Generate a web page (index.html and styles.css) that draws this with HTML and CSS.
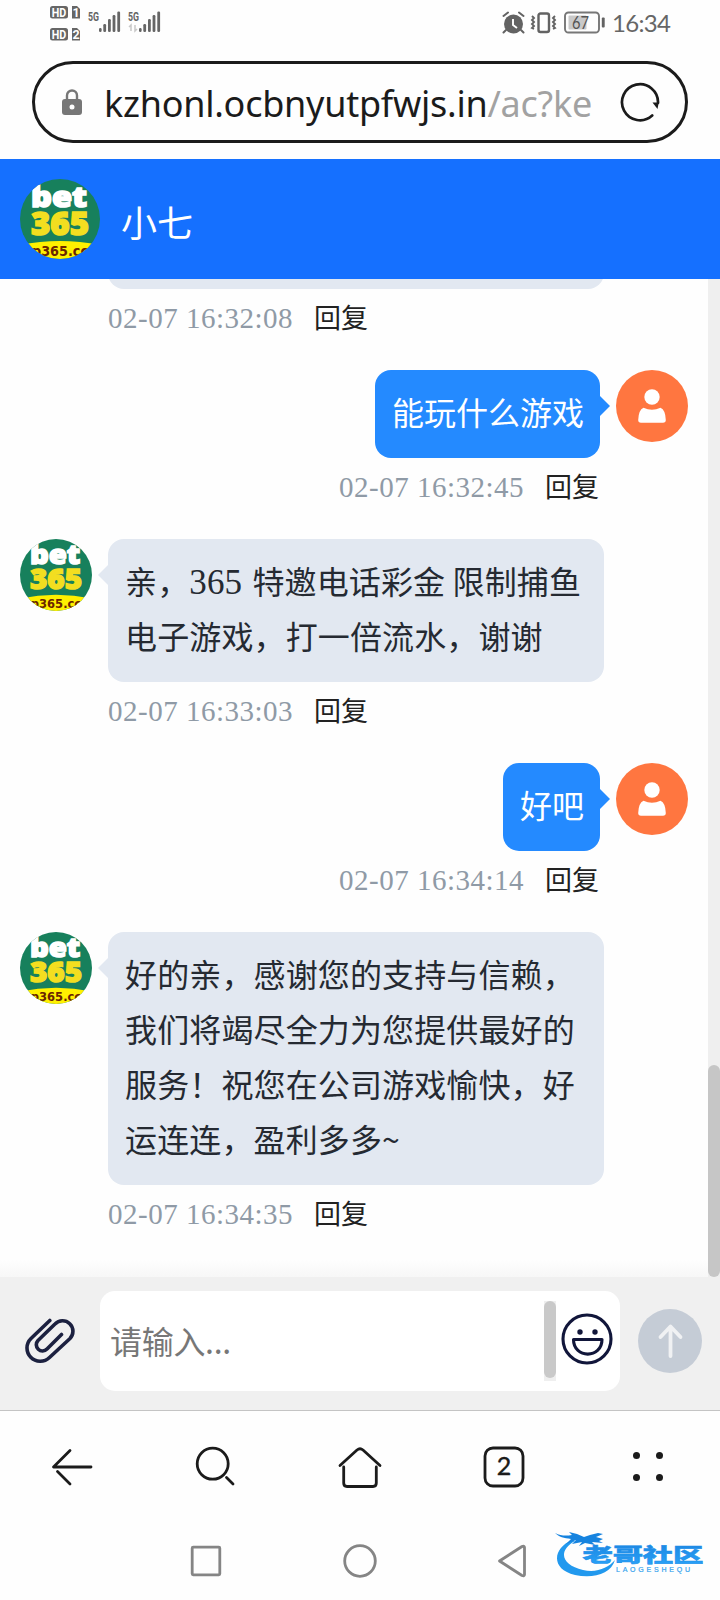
FILE: index.html
```html
<!DOCTYPE html>
<html lang="zh-CN">
<head>
<meta charset="utf-8">
<title>小七</title>
<link rel="stylesheet" href="styles.css">
</head>
<body>
<svg class="defs" aria-hidden="true">
  <defs>
    <clipPath id="disc"><circle cx="40" cy="40" r="40"/></clipPath>
    <linearGradient id="sky" x1="0" y1="0" x2="0" y2="1"><stop offset="0" stop-color="#1a80dc"/><stop offset="1" stop-color="#2aa5fb"/></linearGradient>
    <symbol id="brand" viewBox="0 0 80 80">
      <g clip-path="url(#disc)">
        <rect width="80" height="80" fill="#17805c"/>
        <path d="M0 66Q40 58 80 66V80H0z" fill="#fff000"/>
        <text class="logo-bold" x="11" y="28" font-size="29" textLength="56" lengthAdjust="spacingAndGlyphs" fill="#fff" stroke="#fff">bet</text>
        <text class="logo-bold" x="11" y="56" font-size="32" textLength="58" lengthAdjust="spacingAndGlyphs" fill="#f3de20" stroke="#f3de20">365</text>
        <text class="logo-url" x="12" y="77" font-size="13.500" textLength="56" lengthAdjust="spacingAndGlyphs" fill="#6b2500">p365.cc</text>
      </g>
    </symbol>
    <symbol id="person" viewBox="0 0 72 72">
      <circle cx="36" cy="36" r="36" fill="#ff7640"/>
      <circle cx="36" cy="27" r="7.700" fill="#fff"/>
      <path d="M27.500 37.800Q36 41.800 44.500 37.800Q49.500 40 49.800 50Q49.800 52.800 47 52.800H25Q22.200 52.800 22.200 50Q22.500 40 27.500 37.800z" fill="#fff"/>
    </symbol>
  </defs>
</svg>

<div class="phone">
  <header class="status">
    <svg class="status-left" viewBox="0 0 118 40" width="118" height="40">
      <g fill="#666">
        <rect x="2" y="1" width="18" height="12.500" rx="2.500"/><path d="M24 1h5l3 3v9.500h-8z"/>
        <rect x="2" y="23" width="18" height="12.500" rx="2.500"/><path d="M24 23h5l3 3v9.500h-8z"/>
        <rect x="51" y="23" width="2.600" height="4" rx="1.200"/><rect x="55.300" y="19" width="2.800" height="8" rx="1.200"/><rect x="60" y="14" width="2.800" height="13" rx="1.200"/><rect x="64.600" y="10" width="2.800" height="17" rx="1.200"/><rect x="69.300" y="6.500" width="2.800" height="20.500" rx="1.200"/>
        <rect x="91" y="23" width="2.600" height="4" rx="1.200"/><rect x="95.300" y="19" width="2.800" height="8" rx="1.200"/><rect x="100" y="14" width="2.800" height="13" rx="1.200"/><rect x="104.600" y="10" width="2.800" height="17" rx="1.200"/><rect x="109.300" y="6.500" width="2.800" height="20.500" rx="1.200"/>
      </g>
      <g class="badge-text" fill="#fff" font-size="12.500"><text x="3.800" y="11.800" textLength="14.500" lengthAdjust="spacingAndGlyphs">HD</text><text x="24.500" y="11.800">1</text><text x="3.800" y="33.800" textLength="14.500" lengthAdjust="spacingAndGlyphs">HD</text><text x="24.500" y="33.800">2</text></g>
      <g class="badge-text" fill="#666" font-size="12.500"><text x="40" y="16" textLength="11" lengthAdjust="spacingAndGlyphs">5G</text><text x="80" y="16" textLength="11" lengthAdjust="spacingAndGlyphs">5G</text></g>
      <path d="M83 26v-6l-2 2M87 20v6l2-2" fill="none" stroke="#c8c8c8" stroke-width="1.500"/>
    </svg>
    <div class="status-right">
      <svg viewBox="0 0 104 24" width="104" height="24">
        <circle cx="11.500" cy="13" r="9.500" fill="#636363"/>
        <path d="M1.500 5l4.500-3.500M21.500 5l-4.500-3.500M4 19l-2.500 2.500M19 19l2.500 2.500" stroke="#636363" stroke-width="2" stroke-linecap="round"/>
        <path d="M11 8v6l4 3" stroke="#fff" stroke-width="1.900" fill="none"/>
        <rect x="36.500" y="2.500" width="10.500" height="18.500" rx="2" fill="none" stroke="#636363" stroke-width="2.400"/>
        <path d="M30 5l2 2-2 2 2 2-2 2 2 2-2 2 2 1M53 5l-2 2 2 2-2 2 2 2-2 2 2 2-2 1" fill="none" stroke="#636363" stroke-width="1.900"/>
        <rect x="63" y="1.500" width="34" height="20" rx="3.500" fill="none" stroke="#777" stroke-width="1.900"/>
        <rect x="66.500" y="4.500" width="18" height="14" rx="1" fill="#c9c9c9"/>
        <rect x="99.800" y="6.500" width="2.900" height="10" rx="1" fill="#636363"/>
        <text class="battery" x="70" y="17.500" textLength="17" lengthAdjust="spacingAndGlyphs">67</text>
      </svg>
      <time class="clock">16:34</time>
    </div>
  </header>

  <div class="address">
    <svg class="lock" viewBox="0 0 20 27" width="20" height="27"><path d="M5 12V6.500a5 5 0 0 1 10 0V12" fill="none" stroke="#777" stroke-width="2.400"/><rect y="10" width="20" height="16" rx="3" fill="#777"/><circle cx="10" cy="18" r="2.500" fill="#fff"/></svg>
    <div class="url"><span>kzhonl.ocbnyutpfwjs.in</span><span class="path">/ac?ke</span></div>
    <svg class="reload" viewBox="0 0 40 40" width="40" height="40"><path d="M32.200 33.500A18 18 0 1 1 38 21" fill="none" stroke="#1b1b1b" stroke-width="2.700" stroke-linecap="round"/><path d="M32.500 20.500h6.200l-1.200 6.500z" fill="#1b1b1b"/></svg>
  </div>

  <section class="titlebar">
    <svg width="80" height="80"><use href="#brand"/></svg>
    <h1>小七</h1>
  </section>

  <main class="chat">
    <div class="thread">
      <article class="msg agent cut"><div class="body"><div class="bubble"></div><p class="meta"><time>02-07 16:32:08</time><a>回复</a></p></div></article>
      <article class="msg user"><div class="body"><div class="bubble">能玩什么游戏</div><p class="meta"><time>02-07 16:32:45</time><a>回复</a></p></div><svg class="avatar"><use href="#person"/></svg></article>
      <article class="msg agent"><svg class="avatar"><use href="#brand"/></svg><div class="body"><div class="bubble">亲，<span class="num">365</span> 特邀电话彩金 限制捕鱼<br>电子游戏，打一倍流水，谢谢</div><p class="meta"><time>02-07 16:33:03</time><a>回复</a></p></div></article>
      <article class="msg user"><div class="body"><div class="bubble">好吧</div><p class="meta"><time>02-07 16:34:14</time><a>回复</a></p></div><svg class="avatar"><use href="#person"/></svg></article>
      <article class="msg agent"><svg class="avatar"><use href="#brand"/></svg><div class="body"><div class="bubble">好的亲，感谢您的支持与信赖，<br>我们将竭尽全力为您提供最好的<br>服务！祝您在公司游戏愉快，好<br>运连连，盈利多多~</div><p class="meta"><time>02-07 16:34:35</time><a>回复</a></p></div></article>
      <div class="fade"></div>
    </div>
    <div class="scroll"><div class="thumb"></div></div>
  </main>

  <footer class="composer">
    <svg class="clip" viewBox="0 0 50 46" width="50" height="46"><path d="M24.800 2.500L6 20.500A13.200 13.200 0 0 0 24.500 39.500L45 20.500A10.300 10.300 0 0 0 30 6L13 22.500A6 6 0 0 0 22 31L36.500 16.500" fill="none" stroke="#1c2140" stroke-width="3.600" stroke-linecap="round" stroke-linejoin="round"/></svg>
    <div class="input">
      <span class="placeholder">请输入...</span>
      <div class="mini-track"><div class="mini-thumb"></div></div>
      <svg class="smile" viewBox="0 0 52 52" width="52" height="52"><g fill="none" stroke="#11163a" stroke-width="3.100"><circle cx="26" cy="26" r="24"/><path d="M12.500 26.500h28.500C41 46 12.500 46 12.500 26.500z" stroke-linejoin="round"/></g><circle cx="19" cy="19" r="2.700" fill="#11163a"/><circle cx="34" cy="19" r="2.700" fill="#11163a"/></svg>
    </div>
    <svg class="send" viewBox="0 0 64 64" width="64" height="64"><circle cx="32" cy="32" r="32" fill="#c5ccd6"/><path d="M32.500 47V18M22.500 28l10-10.500 10 10.500" fill="none" stroke="#f0f1f3" stroke-width="3.800" stroke-linecap="round" stroke-linejoin="round"/></svg>
  </footer>

  <nav class="browser-nav">
    <svg viewBox="0 0 44 44"><path d="M41 22H3.500L20 5.500M7.500 26.500L20 39" /></svg>
    <svg viewBox="0 0 44 44"><circle cx="18.700" cy="18.700" r="15.500"/><path d="M32.500 32.500l6.500 6.500"/></svg>
    <svg viewBox="0 0 44 44"><path d="M2 20.500L19 5Q22 2.500 25 5L42 20.500M5.700 22V38Q5.700 41.500 9 41.500H35Q38.300 41.500 38.300 38V22"/></svg>
    <svg viewBox="0 0 44 44"><rect x="3" y="3" width="38" height="38" rx="8"/><text x="22" y="30" text-anchor="middle">2</text></svg>
    <svg viewBox="0 0 44 44" class="dots"><circle cx="10.500" cy="10.500" r="3.500"/><circle cx="33.500" cy="10.500" r="3.500"/><circle cx="10.500" cy="32.500" r="3.500"/><circle cx="33.500" cy="32.500" r="3.500"/></svg>
  </nav>

  <div class="system-nav">
    <svg viewBox="0 0 34 34"><rect x="3.200" y="3.200" width="27.600" height="27.600" rx="1"/></svg>
    <svg viewBox="0 0 34 34"><circle cx="17" cy="17" r="15.300"/></svg>
    <svg viewBox="0 0 34 34"><path d="M2.500 17L25 2.500Q27.500 1.500 27.500 3.500V30.500Q27.500 32.500 25 31.500z" stroke-linejoin="round"/></svg>
    <svg class="watermark" viewBox="0 0 152 50" width="152" height="50">
      <path d="M17 9C-2 17-5 38 20 44C38 48 56 43 60 29C53 37 42 42 28 39C7 34 2 20 20 10z" fill="#2299ee"/>
      <path d="M0 2C6 5 11 5 17 4L14 1L22 3L29 6L35 4L43 2L48 3L41 6L48 8L44 10L48 12L37 11L40 14L30 12L24 15L27 11L17 13L21 9L11 13L16 8C9 7 4 6 0 2z" fill="#1683df"/>
      <text class="wm-cn" transform="translate(27.500 31) scale(1.560 1)" textLength="77.500" fill="url(#sky)">老哥社区</text>
      <text class="wm-en" x="61" y="41" textLength="74">LAOGESHEQU</text>
    </svg>
  </div>
</div>
</body>
</html>
```
FILE: styles.css
```css
* { box-sizing: border-box; }
body { margin: 0; background: #fff; font-family: "Noto Sans CJK SC", sans-serif; }
.defs { position: absolute; width: 0; height: 0; }
.phone { display: flex; flex-direction: column; width: 720px; height: 1600px; overflow: hidden; background: #fefefe; }
.logo-bold { font-family: "Open Sans", "Noto Sans", sans-serif; font-weight: 800; stroke-width: 1.6; }
.logo-url { font-family: "DejaVu Sans", sans-serif; font-weight: 700; }

.status { display: flex; justify-content: space-between; height: 61px; padding: 5px 50px 0 48px; }
.status-right { display: flex; align-items: flex-start; padding-top: 6px; gap: 6px; }
.badge-text { font-family: Roboto, sans-serif; font-weight: 700; }
.battery { font: 17px Lato, sans-serif; fill: #555; }
.clock { width: 58px; font: 24px/24px Lato, sans-serif; letter-spacing: -.7px; color: #666; white-space: nowrap; }

.address { display: flex; align-items: center; height: 82px; margin: 0 32px 16px; padding: 0 25px 0 27px; border: 3px solid #1b1b1b; border-radius: 41px; }
.lock { flex: none; margin-right: 22px; }
.url { width: 492px; padding-top: 4px; font: 36px/60px "Noto Sans", sans-serif; color: #1b1b1b; white-space: nowrap; letter-spacing: -.25px; }
.url .path { color: #a2a2a2; }
.reload { flex: none; margin-left: auto; }

.titlebar { display: flex; align-items: center; height: 120px; padding: 0 20px; gap: 21px; background: #1570ff; }
.titlebar h1 { margin: 3px 0 0; font-size: 36px; line-height: 50px; font-weight: 400; color: #fff; }

.chat { display: flex; height: 998px; }
.thread { position: relative; flex: 1; overflow: hidden; }
.scroll { display: flex; align-items: flex-end; width: 12px; background: #efefef; }
.thumb { width: 12px; height: 212px; border-radius: 6px; background: #c6c6c6; }
.msg { display: flex; align-items: flex-start; gap: 16px; padding: 0 20px; }
.avatar { flex: none; width: 72px; height: 72px; }
.body { display: flex; flex-direction: column; }
.user { justify-content: flex-end; }
.user .body { align-items: flex-end; }
.bubble { position: relative; padding: 14px 16px 19px; border-radius: 16px; font-size: 32px; line-height: 55px; color: #252a32; background: #e2e8f1; white-space: nowrap; }
.agent .bubble { width: 496px; padding-left: 17px; letter-spacing: .13px; }
.user .bubble { padding-left: 17px; color: #fff; background: #248aff; }
.bubble::after { content: ""; position: absolute; top: 26px; border: 10px solid transparent; }
.agent .bubble::after { left: -10px; border-left: 0; border-right-color: #e2e8f1; }
.user .bubble::after { right: -10px; border-right: 0; border-left-color: #248aff; }
.agent.cut { padding-left: 108px; }
.cut .bubble { height: 10px; overflow: hidden; padding: 0; background: none; border-radius: 0; }
.cut .bubble::after { top: -30px; left: 0; width: 496px; height: 40px; border: 0; border-radius: 16px; background: #e2e8f1; }
.num { margin-right: 3px; font-family: "Liberation Serif", serif; font-size: 35px; line-height: 1; }
.meta { display: flex; align-items: baseline; gap: 21px; height: 81px; margin: 0; padding-top: 7px; font-size: 27px; line-height: 42px; color: #222; }
.user .meta { padding-right: 1px; }
.meta time { font-family: "Liberation Serif", serif; font-size: 29px; letter-spacing: .5px; color: #8f9aa6; }
.fade { position: absolute; left: 0; right: 0; bottom: 0; height: 17px; background: linear-gradient(#fefefe00, #f7f7f7); }

.composer { display: flex; align-items: flex-start; height: 134px; padding: 14px 18px 0 25px; background: #f0f0f0; border-bottom: 1px solid #c4c4c4; }
.clip { margin-top: 27px; }
.input { display: flex; align-items: flex-start; width: 520px; height: 100px; margin: 0 18px 0 25px; border-radius: 15px; background: #fff; }
.placeholder { width: 444px; padding-left: 10px; font-size: 32px; line-height: 99px; letter-spacing: -.3px; color: #777; }
.mini-track { width: 12px; height: 80px; margin-top: 10px; background: #efefef; }
.mini-thumb { height: 77px; border-radius: 6px; background: #c9c9c9; }
.smile { margin: 22px 0 0 5px; }
.send { margin-top: 18px; }

.browser-nav { display: flex; justify-content: space-around; height: 110px; padding-top: 34px; }
.browser-nav svg { width: 44px; height: 44px; fill: none; stroke: #1b1b1b; stroke-width: 2.8; stroke-linecap: round; stroke-linejoin: round; }
.browser-nav text { font: 25px Lato, sans-serif; fill: #1b1b1b; stroke: #1b1b1b; stroke-width: .4; }
.browser-nav .dots { fill: #1b1b1b; stroke: none; }
.system-nav { position: relative; display: flex; justify-content: center; gap: 120px; height: 79px; padding-top: 23px; }
.system-nav > svg { width: 34px; height: 34px; fill: none; stroke: #858585; stroke-width: 2.8; }
.system-nav .watermark { position: absolute; left: 555px; top: 10px; width: 152px; height: 50px; stroke: none; }
.wm-cn { font: 900 19.5px "Noto Sans CJK SC", sans-serif; stroke: #2190ea; stroke-width: .5; }
.wm-en { font: 7px "Liberation Sans", sans-serif; fill: #35a3ee; stroke: #35a3ee; stroke-width: .2; }
```
